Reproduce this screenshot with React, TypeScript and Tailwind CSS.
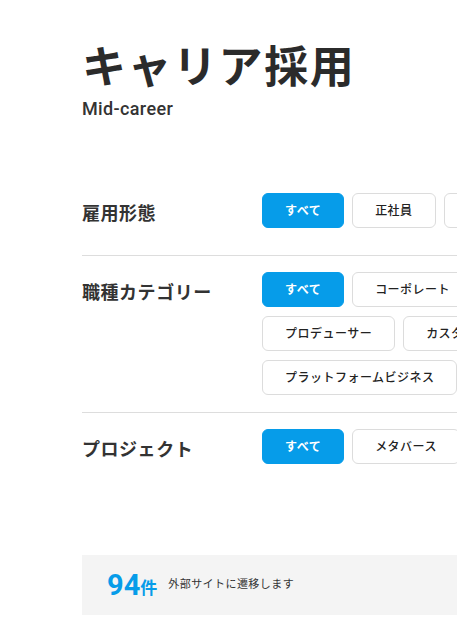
const BLUE = 'bg-[#069ce9] border-[#069ce9] text-white font-bold'

function Chip({ label, active }: { label: string; active?: boolean }) {
  return (
    <button
      className={
        'h-[35px] shrink-0 rounded-[6px] border px-[22px] text-[12px] leading-none tracking-[0.04em] ' +
        (active ? BLUE : 'border-[#dcdcdc] bg-white font-medium text-[#222]')
      }
    >
      {label}
    </button>
  )
}

function FilterRow({
  label,
  rows,
  className,
}: {
  label: string
  rows: string[][]
  className: string
}) {
  return (
    <div className={'flex ' + className}>
      <div className="flex h-[35px] w-[180px] shrink-0 items-center pt-[6px] text-[18px] font-bold tracking-[0.03em] text-[#333]">
        {label}
      </div>
      <div className="flex flex-col gap-[9px]">
        {rows.map((row, i) => (
          <div key={i} className="flex gap-[8px]">
            {row.map((item, j) => (
              <Chip key={item} label={item} active={i === 0 && j === 0} />
            ))}
          </div>
        ))}
      </div>
    </div>
  )
}

export default function App() {
  return (
    <div className="h-[637px] w-[457px] overflow-hidden bg-white font-['Roboto','Noto_Sans_CJK_JP',sans-serif] text-[#333]">
      <div className="w-[1100px] pl-[82px] pt-[46px]">
        <h1 className="text-[44px] font-bold leading-none tracking-[0.035em] text-[#2b2b2b]">
          キャリア採用
        </h1>
        <p className="mt-[10px] text-[18px] font-medium leading-none tracking-[0.02em] text-[#333]">Mid-career</p>

        <div className="mt-[75px]">
          <FilterRow
            label="雇用形態"
            className="border-b border-[#dddddd] pb-[27px]"
            rows={[['すべて', '正社員', '契約社員', 'アルバイト']]}
          />
          <FilterRow
            label="職種カテゴリー"
            className="border-b border-[#dddddd] pt-[16px] pb-[17px]"
            rows={[
              ['すべて', 'コーポレート', 'エンジニア', 'デザイナー'],
              ['プロデューサー', 'カスタマーサクセス', 'マーケティング'],
              ['プラットフォームビジネス'],
            ]}
          />
          <FilterRow
            label="プロジェクト"
            className="pt-[16px]"
            rows={[['すべて', 'メタバース', 'ゲーム', 'プラットフォーム']]}
          />
        </div>

        <div className="mt-[91px] flex h-[60px] items-center bg-[#f4f4f4] pl-[25px]">
          <span className="text-[29px] font-bold leading-none text-[#069ce9]">94</span>
          <span className="mt-[6px] text-[17px] font-bold leading-none text-[#069ce9]">件</span>
          <span className="ml-[11px] text-[11px] tracking-[0.04em] text-[#333]">外部サイトに遷移します</span>
        </div>
      </div>
    </div>
  )
}
